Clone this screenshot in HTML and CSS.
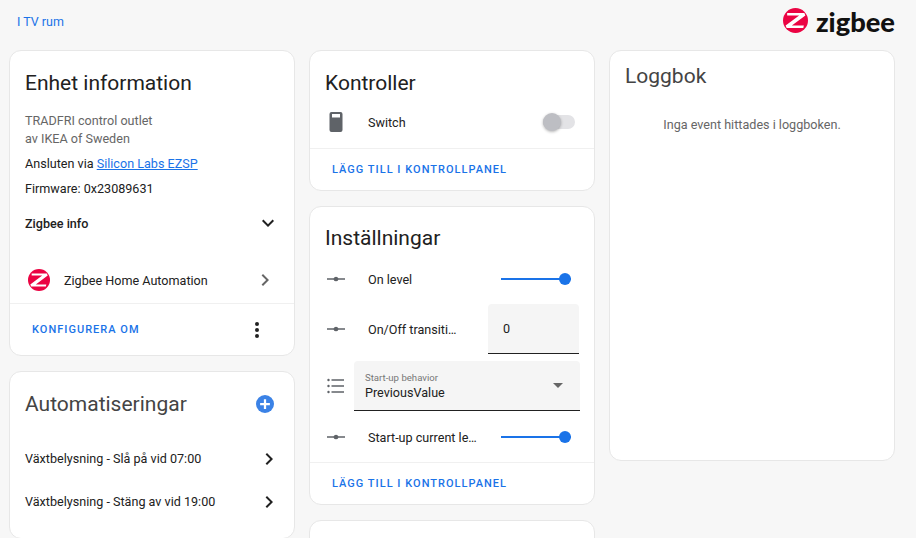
FILE: index.html

```html
<!DOCTYPE html>
<html lang="en">
<head>
  <meta charset="UTF-8" />
  <meta name="viewport" content="width=device-width, initial-scale=1.0" />
  <title>TRADFRI control outlet</title>
  <link rel="stylesheet" href="styles.css">
</head>
<body>
  <div class="header">
    <a class="area-link" href="#">I TV rum</a>
    <div class="brand">
      <svg class="brand-mark" viewBox="0 0 24 24"><circle cx="12" cy="12" r="12" fill="#eb0443"/><path d="M4 4.800h16.500l1 2.400L8.500 16.800H20l-.5 2.400H3.500l-1-2.400L15.500 7.200H4z" fill="#fff"/></svg>
      <span class="brand-name">zigbee</span>
    </div>
  </div>

  <div class="columns">
    <div class="column">
      <div class="card card-info">
        <h1 class="card-title">Enhet information</h1>
        <div class="info">
          <div class="muted">TRADFRI control outlet<br>av IKEA of Sweden</div>
          <div class="info-line">Ansluten via <a href="#">Silicon Labs EZSP</a></div>
          <div class="info-line">Firmware: 0x23089631</div>
        </div>
        <div class="expander">
          <span>Zigbee info</span>
          <svg class="icon-sm" viewBox="0 0 24 24"><path d="M7.410 8.590 12 13.170l4.590-4.580L18 10l-6 6-6-6z"/></svg>
        </div>
        <div class="integration">
          <svg class="integration-mark" viewBox="0 0 24 24"><circle cx="12" cy="12" r="12" fill="#eb0443"/><path d="M4 4.800h16.500l1 2.400L8.500 16.800H20l-.5 2.400H3.500l-1-2.400L15.500 7.200H4z" fill="#fff"/></svg>
          <span class="integration-name">Zigbee Home Automation</span>
          <svg class="icon-sm grey" viewBox="0 0 24 24"><path d="M8.590 16.590 13.170 12 8.590 7.410 10 6l6 6-6 6z"/></svg>
        </div>
        <div class="actions actions-split">
          <a class="action-link" href="#">KONFIGURERA OM</a>
          <svg class="icon-sm" viewBox="0 0 24 24"><path d="M12 16a2 2 0 1 1 0 4 2 2 0 0 1 0-4m0-6a2 2 0 1 1 0 4 2 2 0 0 1 0-4m0-6a2 2 0 1 1 0 4 2 2 0 0 1 0-4"/></svg>
        </div>
      </div>

      <div class="card">
        <div class="title-row">
          <h1 class="card-title light">Automatiseringar</h1>
          <svg class="add-icon" viewBox="0 0 24 24"><circle cx="12" cy="12" r="12" fill="#3b82e6"/><path d="M13.500 5.500v5h5v3h-5v5h-3v-5h-5v-3h5v-5z" fill="#fff"/></svg>
        </div>
        <div class="auto-list">
          <div class="auto-row"><span>Växtbelysning - Slå på vid 07:00</span><svg class="icon-sm" viewBox="0 0 24 24"><path d="M8.590 16.590 13.170 12 8.590 7.410 10 6l6 6-6 6z"/></svg></div>
          <div class="auto-row"><span>Växtbelysning - Stäng av vid 19:00</span><svg class="icon-sm" viewBox="0 0 24 24"><path d="M8.590 16.590 13.170 12 8.590 7.410 10 6l6 6-6 6z"/></svg></div>
        </div>
      </div>
    </div>

    <div class="column">
      <div class="card">
        <h1 class="card-title">Kontroller</h1>
        <div class="entity entity-switch">
          <svg class="entity-icon" viewBox="0 0 24 24"><path d="M7.500 2h9a2 2 0 0 1 2 2v16a2 2 0 0 1-2 2h-9a2 2 0 0 1-2-2V4a2 2 0 0 1 2-2M8 4v3.500h8V4z" fill-rule="evenodd"/></svg>
          <span class="entity-name">Switch</span>
          <div class="toggle"><div class="toggle-knob"></div></div>
        </div>
        <div class="actions"><a class="action-link" href="#">LÄGG TILL I KONTROLLPANEL</a></div>
      </div>

      <div class="card">
        <h1 class="card-title title-settings">Inställningar</h1>
        <div class="entity entity-slider first-setting">
          <svg class="entity-icon" viewBox="0 0 24 24"><path d="M3 11.300h6.600a2.600 2.600 0 0 1 4.800 0H21v1.400h-6.600a2.600 2.600 0 0 1-4.800 0H3z"/></svg>
          <span class="entity-name">On level</span>
          <div class="slider"><div class="slider-thumb"></div></div>
        </div>
        <div class="entity entity-input">
          <svg class="entity-icon" viewBox="0 0 24 24"><path d="M3 11.300h6.600a2.600 2.600 0 0 1 4.800 0H21v1.400h-6.600a2.600 2.600 0 0 1-4.800 0H3z"/></svg>
          <span class="entity-name">On/Off transiti…</span>
          <div class="number-field">0</div>
        </div>
        <div class="entity entity-select">
          <svg class="entity-icon" viewBox="0 0 24 24"><path d="M7.500 5.200H20v1.500H7.500zm0 6H20v1.500H7.500zm0 6H20v1.500H7.500zM4.500 4.800a1.200 1.200 0 1 1 0 2.400 1.200 1.200 0 0 1 0-2.400m0 6a1.200 1.200 0 1 1 0 2.400 1.200 1.200 0 0 1 0-2.400m0 6a1.200 1.200 0 1 1 0 2.400 1.200 1.200 0 0 1 0-2.400"/></svg>
          <div class="select-field">
            <div class="select-text">
              <div class="select-label">Start-up behavior</div>
              <div class="select-value">PreviousValue</div>
            </div>
            <div class="select-arrow"></div>
          </div>
        </div>
        <div class="entity entity-slider last-setting">
          <svg class="entity-icon" viewBox="0 0 24 24"><path d="M3 11.300h6.600a2.600 2.600 0 0 1 4.800 0H21v1.400h-6.600a2.600 2.600 0 0 1-4.800 0H3z"/></svg>
          <span class="entity-name">Start-up current le…</span>
          <div class="slider"><div class="slider-thumb"></div></div>
        </div>
        <div class="actions"><a class="action-link" href="#">LÄGG TILL I KONTROLLPANEL</a></div>
      </div>

      <div class="card card-empty"></div>
    </div>

    <div class="column">
      <div class="card card-log">
        <h1 class="card-title light title-log">Loggbok</h1>
        <div class="log-empty">Inga event hittades i loggboken.</div>
      </div>
    </div>
  </div>
</body>
</html>
```

FILE: styles.css

```css
html, body {
  height: 538px;
  overflow: hidden;
}
body {
  margin: 0;
  background-color: #f7f7f7;
  font-family: Roboto, "Liberation Sans", sans-serif;
  font-size: 12.600px;
  color: #212121;
}
a {
  color: #1a73e8;
}
h1 {
  margin: 0;
  font-weight: 400;
}
svg {
  display: block;
  flex: none;
}

.header {
  height: 43px;
  padding: 0 21px 0 17px;
  display: flex;
  justify-content: space-between;
}
.area-link {
  margin-top: 14px;
  font-size: 12.500px;
  line-height: 15px;
  text-decoration: none;
}
.brand {
  display: flex;
  gap: 8px;
  padding-top: 8px;
}
.brand-mark {
  width: 25px;
  height: 25px;
}
.brand-name {
  font-family: Lato, sans-serif;
  font-size: 27.300px;
  font-weight: 900;
  line-height: 28px;
  color: #111;
}

.columns {
  display: grid;
  grid-template-columns: repeat(3, 286px);
  gap: 14px;
  height: 495px;
  box-sizing: border-box;
  overflow: hidden;
  padding: 7px 0 0 9px;
}
.column {
  display: flex;
  flex-direction: column;
  gap: 15px;
}
.card {
  background-color: #fff;
  border: 1px solid #e7e7e7;
  border-radius: 12px;
  box-sizing: border-box;
  flex: none;
}
.card-title {
  padding: 16px 15px 0;
  font-size: 21px;
  line-height: 32px;
}
.light {
  color: #444;
}

.card-info {
  height: 306px;
}
.info {
  padding: 13px 15px 0;
  line-height: 18px;
}
.muted {
  color: #666;
}
.info-line {
  margin-top: 7px;
}
.expander {
  margin-top: 16px;
  padding: 0 17px 0 15px;
  display: flex;
  justify-content: space-between;
  align-items: center;
  font-weight: 500;
  height: 18px;
}
.icon-sm {
  width: 24px;
  height: 24px;
  fill: #212121;
  margin-right: -3px;
}
.grey {
  fill: #666;
}
.integration {
  margin-top: 26px;
  height: 44px;
  padding: 0 20px 1px 18px;
  display: flex;
  align-items: center;
  border-bottom: 1px solid #f0f0f0;
}
.integration-mark {
  width: 22px;
  height: 22px;
}
.integration-name {
  margin-left: 14px;
  flex: 1;
}
.actions {
  padding: 0 22px;
  border-top: 1px solid #f0f0f0;
  height: 41px;
  display: flex;
  align-items: center;
}
.actions-split {
  border-top: none;
  height: 51px;
  justify-content: space-between;
  padding-right: 28px;
}
.action-link {
  font-size: 11px;
  font-weight: 500;
  letter-spacing: 1.020px;
  text-decoration: none;
}

.title-row {
  display: flex;
  justify-content: space-between;
  align-items: center;
  padding-right: 20px;
}
.title-row .card-title {
  padding-top: 16px;
}
.add-icon {
  width: 18px;
  height: 18px;
  margin-top: 16px;
}
.auto-list {
  padding: 17px 16px 15px 15px;
}
.auto-row {
  height: 43px;
  display: flex;
  justify-content: space-between;
  align-items: center;
}

.entity {
  display: flex;
  align-items: center;
  padding: 0 16px 0 15px;
}
.entity-icon {
  width: 24px;
  height: 24px;
  fill: #5f6368;
  margin-left: -1px;
  margin-right: 20px;
}
.entity-name {
  flex: 1;
  white-space: nowrap;
}
.entity-switch {
  height: 36px;
  margin-top: 5px;
  margin-bottom: 8px;
}
.toggle {
  width: 32px;
  height: 14px;
  margin-right: 3px;
  border-radius: 7px;
  background-color: #e3e3e6;
  position: relative;
}
.toggle-knob {
  position: absolute;
  left: 0;
  top: -2px;
  width: 18px;
  height: 18px;
  border-radius: 50%;
  background-color: #bdbec3;
  box-shadow: 0 1px 3px rgba(0, 0, 0, 0.3);
}

.title-settings {
  padding-top: 15px;
}
.entity-slider {
  height: 36px;
}
.first-setting {
  margin-top: 7px;
}
.last-setting {
  margin-top: 8px;
  margin-bottom: 7px;
}
.slider {
  width: 70px;
  height: 2px;
  margin-right: 7px;
  background-color: #1a73e8;
  position: relative;
}
.slider-thumb {
  position: absolute;
  right: 0;
  top: -5px;
  width: 12px;
  height: 12px;
  border-radius: 50%;
  background-color: #1a73e8;
}
.entity-input {
  height: 50px;
  margin-top: 7px;
  padding-right: 15px;
}
.number-field {
  width: 76px;
  height: 49px;
  padding-left: 15px;
  background-color: #f5f5f5;
  border-bottom: 1px solid #212121;
  border-radius: 4px 4px 0 0;
  line-height: 50px;
}
.entity-select {
  margin-top: 7px;
  height: 50px;
  padding-right: 14px;
}
.entity-select .entity-icon {
  margin-right: 6px;
}
.select-field {
  flex: 1;
  height: 49px;
  background-color: #f5f5f5;
  border-bottom: 1px solid #212121;
  border-radius: 4px 4px 0 0;
  display: flex;
  align-items: center;
  justify-content: space-between;
  padding: 0 17px 0 11px;
}
.select-text {
  padding-top: 3px;
}
.select-label {
  font-size: 9.600px;
  line-height: 12px;
  color: #777;
}
.select-value {
  line-height: 18px;
}
.select-arrow {
  width: 0;
  height: 0;
  border-left: 5px solid transparent;
  border-right: 5px solid transparent;
  border-top: 5px solid #666;
}
.card-empty {
  height: 60px;
}

.card-log {
  height: 411px;
}
.title-log {
  padding-top: 9px;
}
.log-empty {
  margin-top: 25px;
  text-align: center;
  color: #666;
}
```
